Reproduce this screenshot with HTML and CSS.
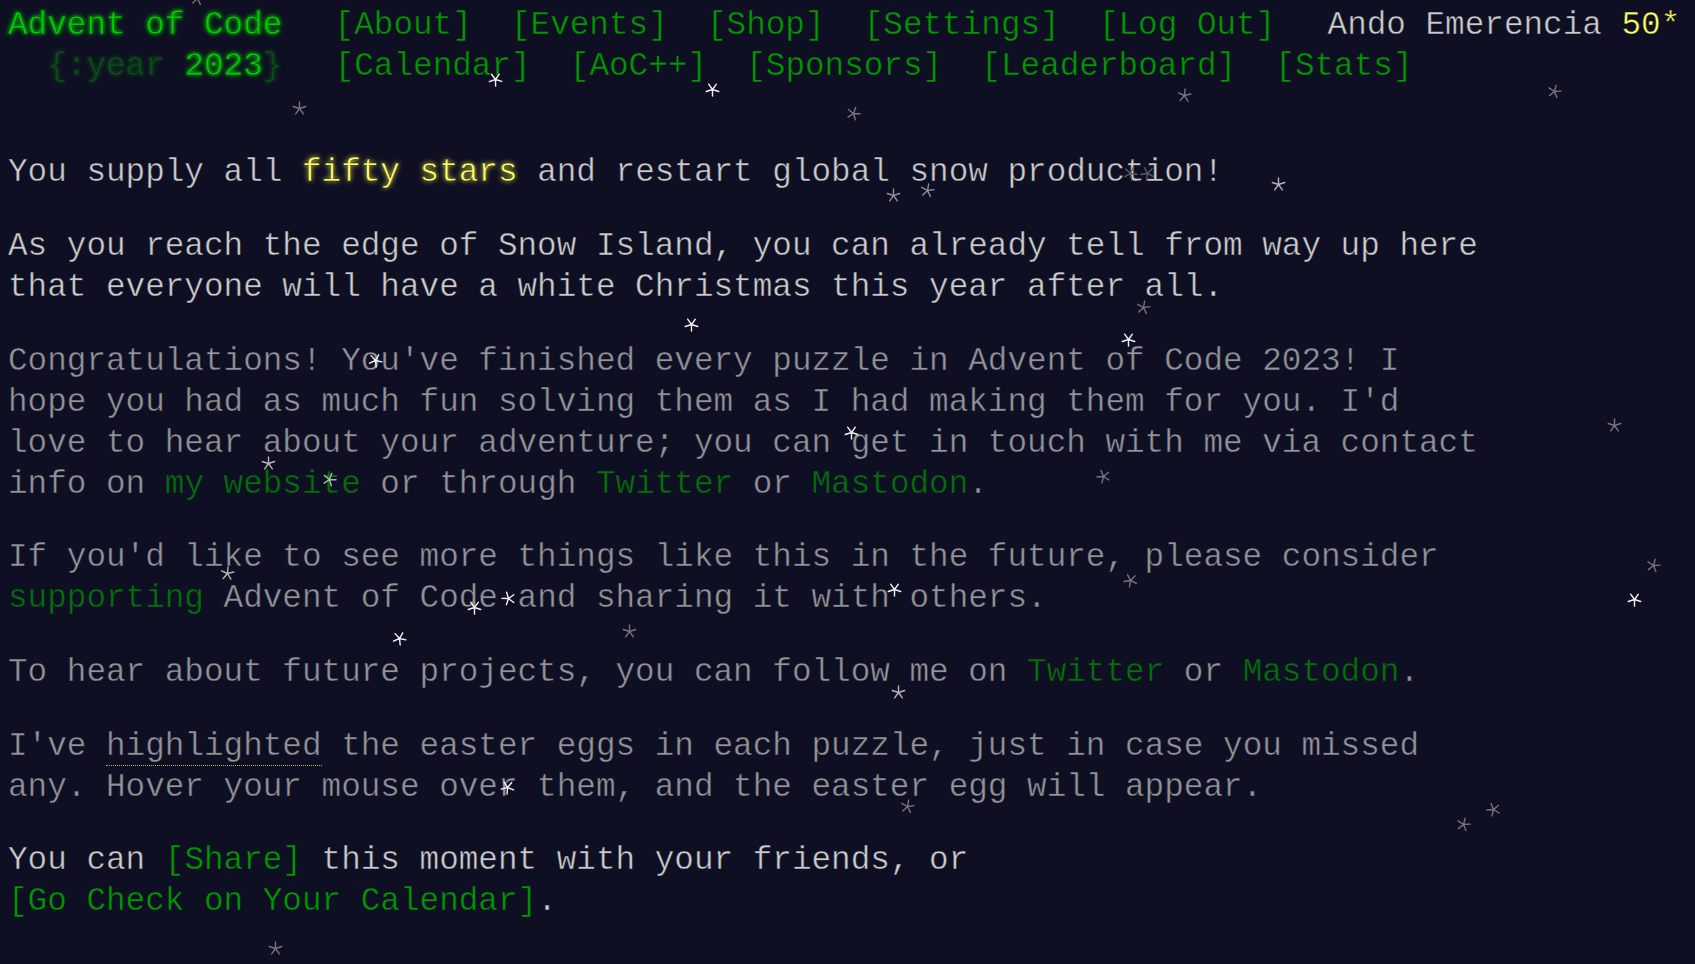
FILE: index.html
```html
<!DOCTYPE html>
<html lang="en">
<head>
<meta charset="utf-8">
<title>Day 25 - Advent of Code 2023</title>
<link rel="stylesheet" href="styles.css">
</head>
<body>
<svg class="defs" width="0" height="0" aria-hidden="true">
  <symbol id="flake" viewBox="-8 -8 16 16">
    <path d="M0 0L0 -7M0 0L6.66 -2.16M0 0L4.11 5.66M0 0L-4.11 5.66M0 0L-6.66 -2.16" stroke="currentColor" stroke-width="1.5" stroke-linecap="round" fill="none"/>
  </symbol>
</svg>
<header>
  <div class="row"><h1 class="title-global"><a href="#">Advent of Code</a></h1><nav><ul><li><a href="#">[About]</a></li><li><a href="#">[Events]</a></li><li><a href="#">[Shop]</a></li><li><a href="#">[Settings]</a></li><li><a href="#">[Log Out]</a></li></ul></nav><div class="user">Ando Emerencia <span class="star-count">50*</span></div></div>
  <div class="row"><h1 class="title-event">&nbsp;&nbsp;<span class="title-event-wrap">{:year </span><a href="#">2023</a><span class="title-event-wrap">}</span></h1><nav><ul><li><a href="#">[Calendar]</a></li><li><a href="#">[AoC++]</a></li><li><a href="#">[Sponsors]</a></li><li><a href="#">[Leaderboard]</a></li><li><a href="#">[Stats]</a></li></ul></nav></div>
</header>
<main>
  <article>
    <p>You supply all <em class="star">fifty stars</em> and restart global snow production!</p>
    <p>As you reach the edge of Snow Island, you can already tell from way up here that everyone will have a white Christmas this year after all.</p>
    <p class="muted">Congratulations! You've finished every puzzle in Advent of Code 2023! I hope you had as much fun solving them as I had making them for you. I'd love to hear about your adventure; you can get in touch with me via contact info on <a href="#">my website</a> or through <a href="#">Twitter</a> or <a href="#">Mastodon</a>.</p>
    <p class="muted">If you'd like to see more things like this in the future, please consider <a href="#">supporting</a> Advent of Code and sharing it with others.</p>
    <p class="muted">To hear about future projects, you can follow me on <a href="#">Twitter</a> or <a href="#">Mastodon</a>.</p>
    <p class="muted">I've <span class="egg">highlighted</span> the easter eggs in each puzzle, just in case you missed any. Hover your mouse over them, and the easter egg will appear.</p>
    <p>You can <a href="#" class="nowrap">[Share]</a> this moment with your friends, or <a href="#" class="nowrap">[Go Check on Your Calendar]</a>.</p>
  </article>
</main>
<div class="snow" aria-hidden="true">
  <svg class="flake dim" style="left:190px;top:-9px;--r:10deg"><use href="#flake"/></svg>
  <svg class="flake white" style="left:488px;top:72px;--r:35deg"><use href="#flake"/></svg>
  <svg class="flake dim" style="left:292px;top:101px;--r:0deg"><use href="#flake"/></svg>
  <svg class="flake white" style="left:705px;top:82px;--r:36deg"><use href="#flake"/></svg>
  <svg class="flake dim" style="left:846px;top:106px;--r:20deg"><use href="#flake"/></svg>
  <svg class="flake dim" style="left:1177px;top:88px;--r:5deg"><use href="#flake"/></svg>
  <svg class="flake dim" style="left:1547px;top:84px;--r:15deg"><use href="#flake"/></svg>
  <svg class="flake mid" style="left:886px;top:188px;--r:0deg"><use href="#flake"/></svg>
  <svg class="flake mid" style="left:920px;top:183px;--r:10deg"><use href="#flake"/></svg>
  <svg class="flake faint" style="left:1123px;top:166px;--r:25deg"><use href="#flake"/></svg>
  <svg class="flake faint" style="left:1140px;top:166px;--r:45deg"><use href="#flake"/></svg>
  <svg class="flake light" style="left:1271px;top:177px;--r:0deg"><use href="#flake"/></svg>
  <svg class="flake white" style="left:684px;top:317px;--r:36deg"><use href="#flake"/></svg>
  <svg class="flake dim" style="left:1136px;top:300px;--r:10deg"><use href="#flake"/></svg>
  <svg class="flake white" style="left:1121px;top:332px;--r:36deg"><use href="#flake"/></svg>
  <svg class="flake white" style="left:368px;top:353px;--r:30deg"><use href="#flake"/></svg>
  <svg class="flake dim" style="left:1607px;top:418px;--r:0deg"><use href="#flake"/></svg>
  <svg class="flake white" style="left:844px;top:425px;--r:36deg"><use href="#flake"/></svg>
  <svg class="flake light" style="left:261px;top:456px;--r:0deg"><use href="#flake"/></svg>
  <svg class="flake light" style="left:322px;top:472px;--r:20deg"><use href="#flake"/></svg>
  <svg class="flake dim" style="left:1096px;top:469px;--r:50deg"><use href="#flake"/></svg>
  <svg class="flake dim" style="left:1646px;top:558px;--r:15deg"><use href="#flake"/></svg>
  <svg class="flake white" style="left:1627px;top:592px;--r:36deg"><use href="#flake"/></svg>
  <svg class="flake dim" style="left:1123px;top:573px;--r:45deg"><use href="#flake"/></svg>
  <svg class="flake light" style="left:220px;top:566px;--r:5deg"><use href="#flake"/></svg>
  <svg class="flake white" style="left:467px;top:600px;--r:36deg"><use href="#flake"/></svg>
  <svg class="flake white" style="left:501px;top:591px;--r:55deg"><use href="#flake"/></svg>
  <svg class="flake white" style="left:887px;top:582px;--r:36deg"><use href="#flake"/></svg>
  <svg class="flake dim" style="left:622px;top:624px;--r:0deg"><use href="#flake"/></svg>
  <svg class="flake white" style="left:392px;top:631px;--r:30deg"><use href="#flake"/></svg>
  <svg class="flake light" style="left:891px;top:685px;--r:0deg"><use href="#flake"/></svg>
  <svg class="flake white" style="left:500px;top:780px;--r:40deg"><use href="#flake"/></svg>
  <svg class="flake dim" style="left:900px;top:799px;--r:10deg"><use href="#flake"/></svg>
  <svg class="flake dim" style="left:1456px;top:817px;--r:15deg"><use href="#flake"/></svg>
  <svg class="flake dim" style="left:1486px;top:802px;--r:50deg"><use href="#flake"/></svg>
  <svg class="flake dim" style="left:268px;top:941px;--r:0deg"><use href="#flake"/></svg>
</div>
</body>
</html>
```

FILE: styles.css
```css
html {
  background: #0f0f23;
}

body {
  margin: 0;
  padding: 5px 8px 0;
  background: #0f0f23;
  color: #cccccc;
  font-family: "Liberation Mono", "DejaVu Sans Mono", monospace;
  font-size: 32.67px;
  line-height: 41px;
  min-height: 959px;
  position: relative;
  overflow: hidden;
  -webkit-text-stroke: 0.45px #0f0f23;
}

.defs {
  position: absolute;
  width: 0;
  height: 0;
}

a {
  color: #009900;
  text-decoration: none;
}

header {
  white-space: nowrap;
  margin-bottom: 2em;
}

header .row {
  display: block;
}

header h1 {
  display: inline-block;
  margin: 0;
  padding-right: 1em;
  font-size: 1em;
  font-weight: normal;
}

header h1 a {
  color: #00cc00;
  text-shadow: 0 0 2px #00cc00, 0 0 5px #00aa00;
}

.title-event-wrap {
  color: #00cc00;
  opacity: 0.33;
  white-space: pre;
  text-shadow: 0 0 2px #00cc00, 0 0 5px #00aa00;
}

header nav {
  display: inline-block;
}

header nav ul {
  list-style: none;
  margin: 0;
  padding: 0;
  display: inline-block;
}

header nav li {
  display: inline-block;
  padding: 0 0.6em;
}

header .user {
  display: inline-block;
  padding-left: 1em;
}

.star-count {
  color: #ffff66;
}

main {
  display: block;
}

article {
  width: 45.2em;
}

article p {
  margin: 0 0 1em;
}

em.star {
  font-style: normal;
  color: #ffff66;
  text-shadow: 0 0 5px #cccc44;
}

.muted {
  opacity: 0.7;
}

.egg {
  border-bottom: 1px dotted #ffff66;
}

.nowrap {
  white-space: nowrap;
}

.snow {
  position: absolute;
  inset: 0;
  pointer-events: none;
}

.flake {
  position: absolute;
  width: 15px;
  height: 15px;
  transform: rotate(var(--r));
}

.flake.white {
  color: #f2f2f2;
}

.flake.light {
  color: #b4b4b8;
}

.flake.mid {
  color: #8e8e94;
}

.flake.dim {
  color: #74747c;
}

.flake.faint {
  color: #5c5c66;
}
```
